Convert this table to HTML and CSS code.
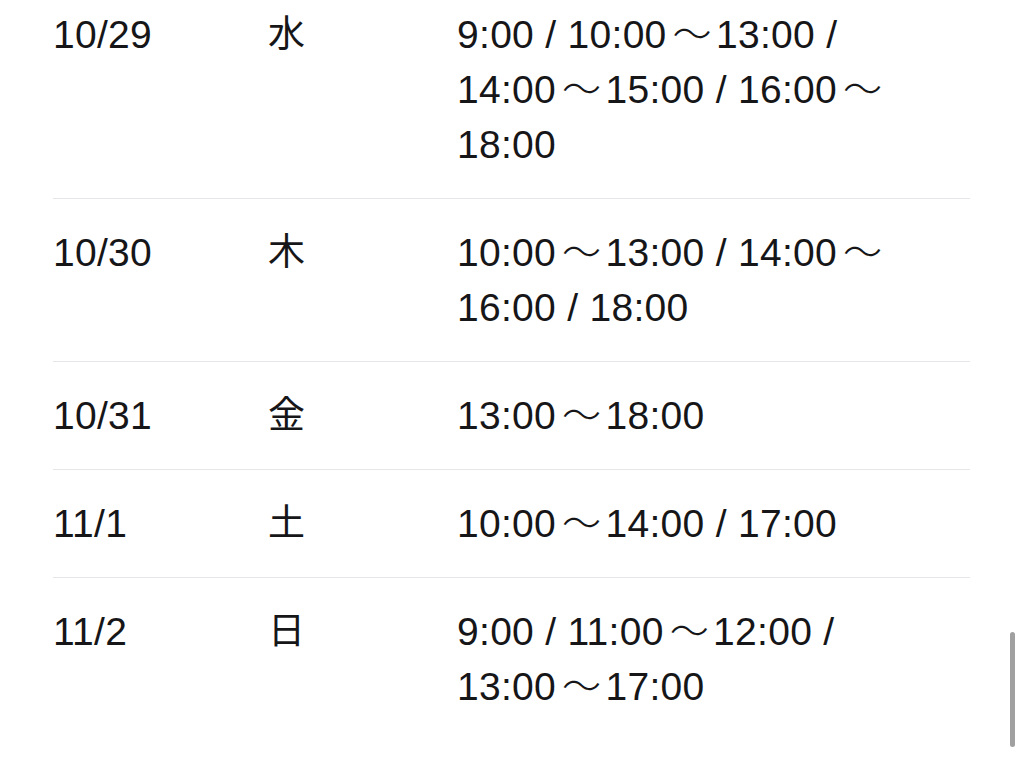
FILE: index.html
```html
<!DOCTYPE html>
<html lang="ja">
<head>
<meta charset="utf-8">
<link rel="stylesheet" href="styles.css">
</head>
<body>
<div class="page">
  <div class="table">
    <div class="row">
      <div class="date">10/29</div>
      <div class="day">水</div>
      <div class="times">9:00 / 10:00<span class="wave">～</span>13:00 / 14:00<span class="wave">～</span>15:00 / 16:00<span class="wave">～</span>18:00</div>
    </div>
    <div class="row">
      <div class="date">10/30</div>
      <div class="day">木</div>
      <div class="times">10:00<span class="wave">～</span>13:00 / 14:00<span class="wave">～</span>16:00 / 18:00</div>
    </div>
    <div class="row">
      <div class="date">10/31</div>
      <div class="day">金</div>
      <div class="times">13:00<span class="wave">～</span>18:00</div>
    </div>
    <div class="row">
      <div class="date">11/1</div>
      <div class="day">土</div>
      <div class="times">10:00<span class="wave">～</span>14:00 / 17:00</div>
    </div>
    <div class="row last">
      <div class="date">11/2</div>
      <div class="day">日</div>
      <div class="times">9:00 / 11:00<span class="wave">～</span>12:00 / 13:00<span class="wave">～</span>17:00</div>
    </div>
  </div>
  <div class="scrollbar"></div>
</div>
</body>
</html>
```

FILE: styles.css
```css
html, body {
  margin: 0;
  padding: 0;
  background: #ffffff;
  overflow: hidden;
}
body {
  font-family: "Liberation Sans", "Noto Sans CJK JP", sans-serif;
  color: #161618;
  font-size: 39px;
  line-height: 55px;
}
.page {
  position: relative;
  width: 1024px;
  height: 770px;
  overflow: hidden;
}
.table {
  margin: -19px 0 0 53px;
  width: 917px;
}
.row {
  display: grid;
  grid-template-columns: 215px 189px 1fr;
  padding: 26px 0;
  border-bottom: 1px solid #e6e6e8;
}
.row.last {
  border-bottom: none;
}
.date,
.times {
  letter-spacing: 0.3px;
}
.day {
  font-size: 37px;
  font-weight: 400;
}
.times {
  padding-right: 60px;
}
.wave {
  font-weight: 300;
  margin: 0 4px 0 6px;
}
.scrollbar {
  position: absolute;
  left: 1010px;
  top: 632px;
  width: 5px;
  height: 115px;
  border-radius: 3px;
  background: #a0a0a0;
}
```
